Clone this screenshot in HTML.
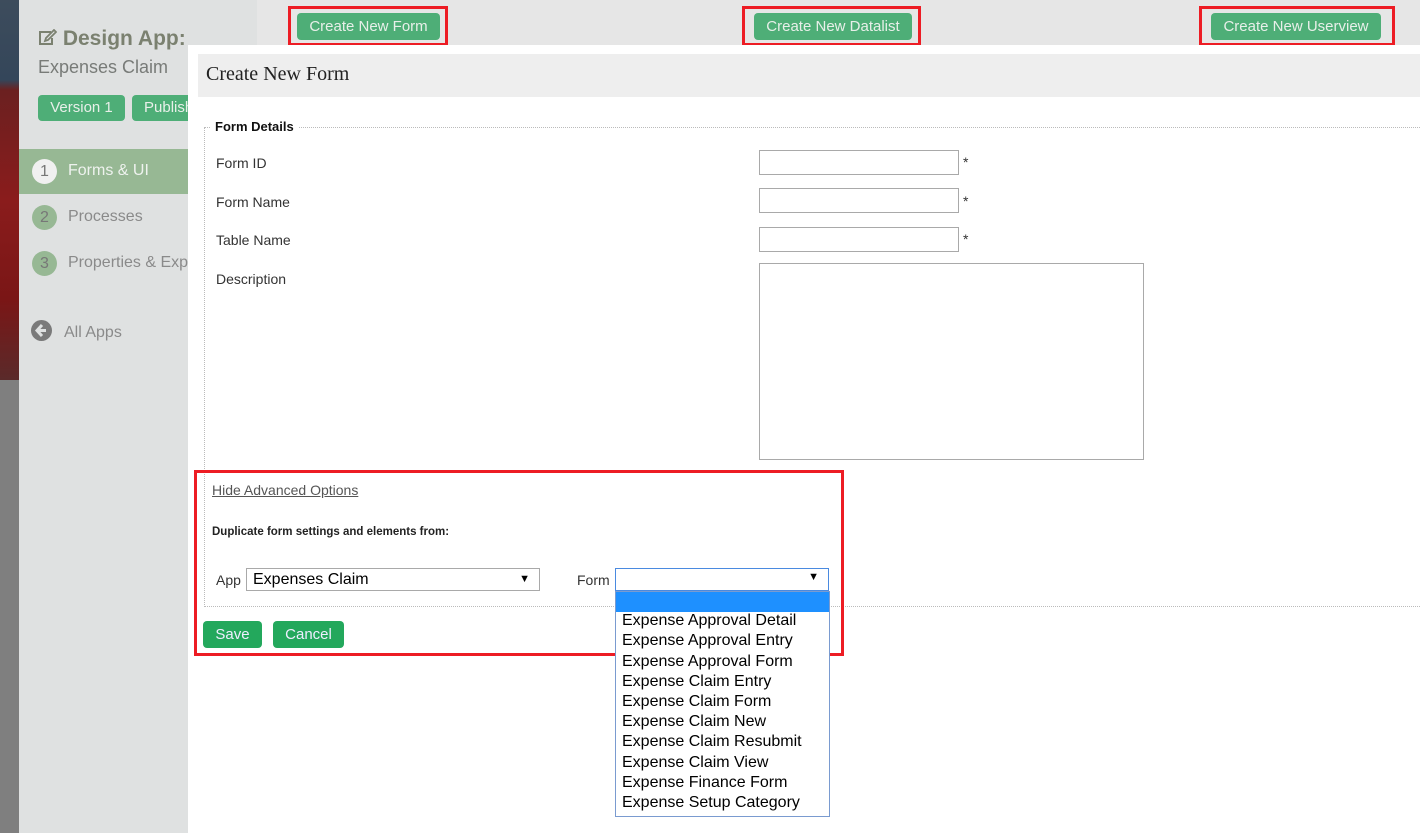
<!DOCTYPE html>
<html><head><meta charset="utf-8"><style>
*{box-sizing:border-box;margin:0;padding:0}
body{width:1420px;height:833px;overflow:hidden;position:relative;font-family:"Liberation Sans",sans-serif;background:#e6e6e6}
.photo{position:absolute;left:0;top:0;width:19px;height:380px;background:linear-gradient(180deg,#3d4c5c 0,#34465a 80px,#6b2020 90px,#8a1c1c 200px,#7a1616 300px,#5a2a2a 380px)}
.gstrip{position:absolute;left:0;top:380px;width:19px;height:453px;background:#7f7f7f}
.side{position:absolute;left:19px;top:0;width:238px;height:833px;background:#dfe1e1}
.btn{position:absolute;background:#4eae77;color:#e8efe9;border-radius:4px;font-size:15px;text-align:center;line-height:27px}
.red{position:absolute;border:3px solid #ed1c24}
.modal{position:absolute;left:188px;top:45px;width:1232px;height:788px;background:#fff}
.lbl{position:absolute;font-size:14px;color:#333}
.inp{position:absolute;border:1px solid #a9a9a9;background:#fff;width:200px;height:25px}
.star{position:absolute;font-size:14px;color:#333}
.opt{position:absolute;left:622px;font-size:16px;color:#000}
</style></head><body>
<div class="photo"></div><div class="gstrip"></div>
<div class="side">
  <div style="position:absolute;left:19px;top:27px;font-size:21px;font-weight:bold;color:#7b8170">
    <svg width="19" height="17" viewBox="0 0 19 17" style="vertical-align:-1px"><path d="M13 3H2v12h12V9" fill="none" stroke="#7b8170" stroke-width="2"/><path d="M16 1l2 2-8 8-3 1 1-3z" fill="none" stroke="#7b8170" stroke-width="1.8"/></svg> Design App:</div>
  <div style="position:absolute;left:19px;top:57px;font-size:18px;color:#787b78">Expenses Claim</div>
  <div class="btn" style="left:19px;top:95px;width:87px;height:26px;font-size:15px;line-height:26px">Version 1</div>
  <div class="btn" style="left:113px;top:95px;width:80px;height:26px;font-size:15px;line-height:26px;text-align:left;padding-left:12px">Publish</div>
  <div style="position:absolute;left:0;top:149px;width:238px;height:45px;background:#97b894"></div>
  <div style="position:absolute;left:13px;top:159px;width:25px;height:25px;border-radius:50%;background:#f0f0f0;color:#777;font-size:16px;text-align:center;line-height:25px">1</div>
  <div style="position:absolute;left:49px;top:162px;font-size:16px;color:#eef2ee">Forms &amp; UI</div>
  <div style="position:absolute;left:13px;top:205px;width:25px;height:25px;border-radius:50%;background:#97b894;color:#777;font-size:16px;text-align:center;line-height:25px">2</div>
  <div style="position:absolute;left:49px;top:208px;font-size:16px;color:#8a8a8a">Processes</div>
  <div style="position:absolute;left:13px;top:251px;width:25px;height:25px;border-radius:50%;background:#97b894;color:#777;font-size:16px;text-align:center;line-height:25px">3</div>
  <div style="position:absolute;left:49px;top:254px;font-size:16px;color:#8a8a8a;white-space:nowrap">Properties &amp; Export</div>
  <div style="position:absolute;left:12px;top:320px;width:21px;height:21px;border-radius:50%;background:#7a7a7a"><svg width="21" height="21" viewBox="0 0 21 21"><path d="M11 5l-5 5.5 5 5.5M6 10.5h9" fill="none" stroke="#dfe1e1" stroke-width="3"/></svg></div>
  <div style="position:absolute;left:45px;top:324px;font-size:16px;color:#8a8a8a">All Apps</div>
</div>
<div class="btn" style="left:297px;top:13px;width:143px;height:27px">Create New Form</div>
<div class="red" style="left:288px;top:6px;width:160px;height:40px"></div>
<div class="btn" style="left:754px;top:13px;width:158px;height:27px">Create New Datalist</div>
<div class="red" style="left:742px;top:6px;width:179px;height:40px"></div>
<div class="btn" style="left:1211px;top:13px;width:170px;height:27px">Create New Userview</div>
<div class="red" style="left:1199px;top:6px;width:196px;height:40px"></div>

<div class="modal"></div>
<div style="position:absolute;left:198px;top:54px;width:1222px;height:43px;background:#eee"></div>
<div style="position:absolute;left:206px;top:63px;font-family:'Liberation Serif',serif;font-size:20px;color:#222">Create New Form</div>
<div style="position:absolute;left:204px;top:127px;width:1230px;height:480px;border:1px dotted #bbb"></div>
<div style="position:absolute;left:211px;top:119px;background:#fff;padding:0 4px;font-size:13px;font-weight:bold;color:#111">Form Details</div>
<div class="lbl" style="left:216px;top:155px">Form ID</div>
<div class="lbl" style="left:216px;top:194px">Form Name</div>
<div class="lbl" style="left:216px;top:232px">Table Name</div>
<div class="lbl" style="left:216px;top:271px">Description</div>
<div class="inp" style="left:759px;top:150px"></div><div class="star" style="left:963px;top:154px">*</div>
<div class="inp" style="left:759px;top:188px"></div><div class="star" style="left:963px;top:193px">*</div>
<div class="inp" style="left:759px;top:227px"></div><div class="star" style="left:963px;top:231px">*</div>
<div class="inp" style="left:759px;top:263px;width:385px;height:197px"></div>

<div style="position:absolute;left:212px;top:482px;font-size:14px;color:#555;text-decoration:underline">Hide Advanced Options</div>
<div style="position:absolute;left:212px;top:526px;font-size:11.5px;font-weight:bold;color:#222">Duplicate form settings and elements from:</div>
<div class="lbl" style="left:216px;top:572px">App</div>
<div style="position:absolute;left:246px;top:568px;width:294px;height:23px;border:1px solid #a9a9a9;font-size:16px;padding-left:6px;line-height:21px">Expenses Claim<span style="position:absolute;right:9px;top:0;font-size:11px">▼</span></div>
<div class="lbl" style="left:577px;top:572px">Form</div>
<div style="position:absolute;left:615px;top:568px;width:214px;height:23px;border:1px solid #4a8ae0;background:#fff"><span style="position:absolute;right:9px;top:2px;font-size:11px">▼</span></div>
<div class="btn" style="left:203px;top:621px;width:59px;height:27px;background:#23a85c;color:#eef;line-height:27px">Save</div>
<div class="btn" style="left:273px;top:621px;width:71px;height:27px;background:#23a85c;color:#eef;line-height:27px">Cancel</div>
<div class="red" style="left:194px;top:470px;width:650px;height:186px"></div>

<div style="position:absolute;left:615px;top:591px;width:215px;height:226px;border:1px solid #7a9bd0;background:#fff"></div>
<div style="position:absolute;left:616px;top:592px;width:213px;height:20px;background:#1e90ff"></div>
<div class="opt" style="top:612px">Expense Approval Detail</div>
<div class="opt" style="top:632px">Expense Approval Entry</div>
<div class="opt" style="top:653px">Expense Approval Form</div>
<div class="opt" style="top:673px">Expense Claim Entry</div>
<div class="opt" style="top:693px">Expense Claim Form</div>
<div class="opt" style="top:713px">Expense Claim New</div>
<div class="opt" style="top:733px">Expense Claim Resubmit</div>
<div class="opt" style="top:754px">Expense Claim View</div>
<div class="opt" style="top:774px">Expense Finance Form</div>
<div class="opt" style="top:794px">Expense Setup Category</div>
</body></html>
